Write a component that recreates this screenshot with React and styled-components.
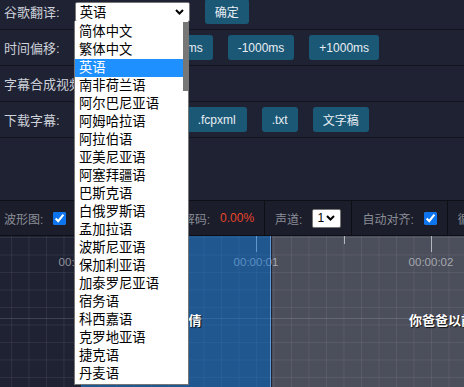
import styled, { createGlobalStyle } from 'styled-components'

const GlobalStyle = createGlobalStyle`
  html, body {
    margin: 0;
    padding: 0;
    background: #1f2233;
    overflow: hidden;
  }
  body {
    font-family: "Liberation Sans", "Noto Sans CJK SC", sans-serif;
  }
`

const Page = styled.div`
  position: relative;
  height: 100vh;
  display: flex;
  flex-direction: column;
  overflow: hidden;
`

const Settings = styled.div`
  margin-top: -6px;
`

const Row = styled.div`
  display: flex;
  align-items: center;
  gap: 15px;
  height: 35px;
  padding-left: 4px;
  border-bottom: 1px solid #13141d;
  white-space: nowrap;
`

const Label = styled.span`
  min-width: 55px;
  font-size: 13px;
  color: #cdd1d9;
`

const Button = styled.button`
  height: 25px;
  padding: 0 10px;
  border: none;
  border-radius: 3px;
  background: #1b5876;
  color: #e9eef3;
  font-family: inherit;
  font-size: 12px;
  cursor: pointer;
`

const SelectBox = styled.div`
  display: flex;
  align-items: center;
  justify-content: space-between;
  box-sizing: border-box;
  width: ${({ width }) => width}px;
  height: ${({ height }) => height}px;
  padding: 0 5px 0 4px;
  border: 1px solid #767676;
  border-radius: 2px;
  background: #fff;
  color: #000;
  font-size: ${({ fontSize }) => fontSize}px;
`

const Toolbar = styled.div`
  display: flex;
  height: 34px;
  margin-top: 62px;
  border-top: 1px solid #0e0f16;
  border-bottom: 1px solid #0e0f16;
  background: #1b1d2a;
  white-space: nowrap;
`

const Section = styled.div`
  display: flex;
  align-items: center;
  gap: 10px;
  padding: 0 10px;
  border-right: 1px solid #0e0f16;
  font-size: 12px;
  color: #8a8d97;

  &:first-child {
    padding-left: 4px;
  }
`

const Check = styled.input`
  width: 13px;
  height: 13px;
  margin: 0;
  accent-color: #0b74ee;
`

const Percent = styled.span`
  color: #e8452c;
`

const Timeline = styled.div`
  position: relative;
  flex: 1;
  background-color: #1f2233;
  background-image: linear-gradient(to right, rgba(255, 255, 255, 0.07) 1px, transparent 1px),
    linear-gradient(to bottom, rgba(255, 255, 255, 0.07) 1px, transparent 1px);
  background-size: 17.5px 17.5px;
  background-position: 11px 1px;
`

const CenterLine = styled.div`
  position: absolute;
  left: 0;
  right: 0;
  top: 82px;
  height: 1px;
  background: rgba(255, 255, 255, 0.14);
`

const Tick = styled.div`
  position: absolute;
  top: 0;
  width: 1px;
  height: ${({ long }) => (long ? 16 : 8)}px;
  background: #a3a6ae;
`

const TimeText = styled.div`
  position: absolute;
  top: 20px;
  width: 60px;
  margin-left: -30px;
  text-align: center;
  font-size: 11.5px;
  line-height: 12px;
  color: #8f929c;
`

const Block = styled.div`
  position: absolute;
  top: 0;
  bottom: 0;
  display: flex;
  justify-content: center;
  padding-top: 75px;
  box-sizing: border-box;
  background: ${({ active }) => (active ? 'rgba(33, 140, 235, 0.5)' : 'rgba(255, 255, 255, 0.2)')};
  border-right: ${({ active }) => (active ? '1px solid rgba(120, 180, 240, 0.7)' : 'none')};
`

const SubText = styled.span`
  height: 18px;
  font-family: "Noto Sans CJK SC", sans-serif;
  font-size: 13px;
  line-height: 18px;
  font-weight: 700;
  color: #fff;
  white-space: nowrap;
  text-shadow: 1px 1px 1px rgba(0, 0, 0, 0.8);
`

const Dropdown = styled.div`
  position: absolute;
  left: 74px;
  top: 21px;
  display: flex;
  box-sizing: border-box;
  width: 115px;
  padding: 2px 0 1px;
  border: 1px solid #767676;
  border-top: none;
  background: #fff;
`

const OptionList = styled.div`
  flex: 1;
`

const Option = styled.div`
  height: 18px;
  padding-left: 4px;
  font-size: 13.33px;
  line-height: 18px;
  white-space: nowrap;
  color: ${({ selected }) => (selected ? '#fff' : '#000')};
  background: ${({ selected }) => (selected ? '#1e90ff' : 'transparent')};
`

const ScrollTrack = styled.div`
  width: 5px;
`

const ScrollThumb = styled.div`
  height: 69px;
  margin-top: -1px;
  background: #777;
`

const Chevron = () => (
  <svg width="9" height="6" viewBox="0 0 9 6">
    <polyline points="1,1 4.5,4.5 8,1" fill="none" stroke="#000" strokeWidth="2" />
  </svg>
)

const LANGUAGES = [
  '简体中文',
  '繁体中文',
  '英语',
  '南非荷兰语',
  '阿尔巴尼亚语',
  '阿姆哈拉语',
  '阿拉伯语',
  '亚美尼亚语',
  '阿塞拜疆语',
  '巴斯克语',
  '白俄罗斯语',
  '孟加拉语',
  '波斯尼亚语',
  '保加利亚语',
  '加泰罗尼亚语',
  '宿务语',
  '科西嘉语',
  '克罗地亚语',
  '捷克语',
  '丹麦语',
]

const SECOND = 175
const ORIGIN = 81

const TICKS = [0, 0.5, 1, 1.5, 2, 2.5]

const App = () => {
  return (
    <Page>
      <GlobalStyle />
      <Settings>
        <Row>
          <Label>谷歌翻译:</Label>
          <SelectBox width={115} height={20} fontSize={13.33}>
            英语
            <Chevron />
          </SelectBox>
          <Button>确定</Button>
        </Row>
        <Row>
          <Label>时间偏移:</Label>
          <Button>-100ms</Button>
          <Button>+100ms</Button>
          <Button>-1000ms</Button>
          <Button>+1000ms</Button>
        </Row>
        <Row>
          <Label>字幕合成视频:</Label>
        </Row>
        <Row>
          <Label>下载字幕:</Label>
          <Button>.srt</Button>
          <Button>.json</Button>
          <Button style={{ padding: '0 11px' }}>.fcpxml</Button>
          <Button>.txt</Button>
          <Button>文字稿</Button>
        </Row>
      </Settings>

      <Toolbar>
        <Section>
          波形图:
          <Check type="checkbox" defaultChecked />
        </Section>
        <Section>
          显示字幕:
          <Check type="checkbox" />
        </Section>
        <Section>
          解码:
          <Percent>0.00%</Percent>
        </Section>
        <Section>
          声道:
          <SelectBox width={29} height={19} fontSize={12}>
            1
            <Chevron />
          </SelectBox>
        </Section>
        <Section>
          自动对齐:
          <Check type="checkbox" defaultChecked />
        </Section>
        <Section>循环播放:</Section>
      </Toolbar>

      <Timeline>
        <CenterLine />
        {TICKS.map((t) => (
          <Tick key={t} long={Number.isInteger(t)} style={{ left: ORIGIN + t * SECOND }} />
        ))}
        {TICKS.filter((t) => Number.isInteger(t)).map((t) => (
          <TimeText key={t} style={{ left: ORIGIN + t * SECOND }}>
            00:00:0{t}
          </TimeText>
        ))}
        <Block active style={{ left: 81, width: 190 }}>
          <SubText>我是小倩</SubText>
        </Block>
        <Block style={{ left: 272, width: 391 }}>
          <SubText>你爸爸以前也是这样</SubText>
        </Block>
      </Timeline>

      <Dropdown>
        <OptionList>
          {LANGUAGES.map((lang) => (
            <Option key={lang} selected={lang === '英语'}>
              {lang}
            </Option>
          ))}
        </OptionList>
        <ScrollTrack>
          <ScrollThumb />
        </ScrollTrack>
      </Dropdown>
    </Page>
  )
}

export default App
